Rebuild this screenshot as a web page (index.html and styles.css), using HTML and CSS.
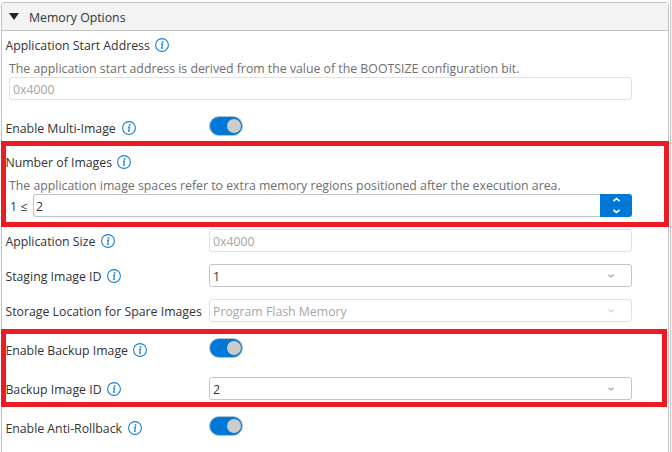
FILE: index.html
```
<!DOCTYPE html>
<html lang="en">
<head>
<meta charset="utf-8">
<title>Memory Options</title>
<link rel="stylesheet" href="styles.css">
</head>
<body>
<svg width="0" height="0" class="defs">
  <symbol id="info" viewBox="0 0 14 14">
    <circle cx="7" cy="7" r="6.4" fill="none" stroke="#1683d8" stroke-width="1.1"/>
    <circle cx="7.6" cy="3.9" r=".9" fill="#1683d8"/>
    <path d="M6 6.1h1.5L6.6 10.2h1.3" fill="none" stroke="#1683d8" stroke-width="1.2"/>
  </symbol>
  <symbol id="chevron" viewBox="0 0 6 4">
    <path d="M.4 .7 3 2.8 5.6 .7" fill="none" stroke="currentColor" stroke-width="1.4"/>
  </symbol>
</svg>
<main class="panel">
  <header class="panel-header">
    <svg class="caret" viewBox="0 0 10 7"><path d="M0 0h10L5 7z" fill="#222"/></svg>
    <h1>Memory Options</h1>
  </header>
  <section class="panel-body">
    <div class="block">
      <div class="label">Application Start Address<svg class="info"><use href="#info"/></svg></div>
      <p class="description">The application start address is derived from the value of the BOOTSIZE configuration bit.</p>
      <div class="field disabled">0x4000</div>
    </div>
    <div class="row row-toggle">
      <div class="label label-wide">Enable Multi-Image<svg class="info"><use href="#info"/></svg></div>
      <div class="toggle"></div>
    </div>
    <div class="block block-number">
      <div class="label">Number of Images<svg class="info"><use href="#info"/></svg></div>
      <p class="description">The application image spaces refer to extra memory regions positioned after the execution area.</p>
      <div class="spinner">
        <span class="bound">1 ≤</span>
        <div class="field">2</div>
        <div class="steps">
          <svg class="chevron up"><use href="#chevron"/></svg>
          <svg class="chevron"><use href="#chevron"/></svg>
        </div>
      </div>
    </div>
    <div class="row">
      <div class="label label-wide">Application Size<svg class="info"><use href="#info"/></svg></div>
      <div class="field disabled">0x4000</div>
    </div>
    <div class="row">
      <div class="label label-wide">Staging Image ID<svg class="info"><use href="#info"/></svg></div>
      <div class="field select">1<svg class="chevron"><use href="#chevron"/></svg></div>
    </div>
    <div class="row">
      <div class="label">Storage Location for Spare Images</div>
      <div class="field select disabled">Program Flash Memory<svg class="chevron"><use href="#chevron"/></svg></div>
    </div>
    <div class="row row-toggle">
      <div class="label">Enable Backup Image<svg class="info"><use href="#info"/></svg></div>
      <div class="toggle"></div>
    </div>
    <div class="row row-backup">
      <div class="label">Backup Image ID<svg class="info"><use href="#info"/></svg></div>
      <div class="field select">2<svg class="chevron"><use href="#chevron"/></svg></div>
    </div>
    <div class="row row-toggle">
      <div class="label label-wide">Enable Anti-Rollback<svg class="info"><use href="#info"/></svg></div>
      <div class="toggle"></div>
    </div>
  </section>
</main>
<div class="highlight highlight-number"></div>
<div class="highlight highlight-backup"></div>
</body>
</html>
```
FILE: styles.css
```
* { box-sizing: border-box; }

body {
  margin: 0;
  width: 672px;
  height: 452px;
  overflow: hidden;
  position: relative;
  display: flex;
  padding: 2px 1px 0;
  background: linear-gradient(to right, #fff 670px, #c8c8c8 670px, #c8c8c8 671px, #f3f3f3 671px);
  font: 12.3px/18px "Open Sans", "Noto Sans", sans-serif;
  color: #333;
}

.defs { position: absolute; }

.panel {
  width: 668px;
  height: 460px;
  border: 1px solid #c4c4c4;
  border-radius: 3px 3px 0 0;
  background: #fff;
}

.panel-header {
  display: flex;
  align-items: center;
  gap: 10px;
  height: 28px;
  padding-left: 7px;
  border-bottom: 1px solid #c4c4c4;
  background: #f3f3f3;
  border-radius: 2px 2px 0 0;
}

.panel-header h1 { margin: 0; padding-top: 2px; font-size: inherit; font-weight: 400; }
.caret { width: 10px; height: 7px; }

.panel-body { padding-left: 4px; }

.label {
  display: flex;
  align-items: center;
  gap: 5px;
  margin-left: -.6px;
  padding-top: 2px;
  white-space: nowrap;
}

.label-wide { gap: 6px; }

.info { width: 14px; height: 14px; flex: none; margin-bottom: 2px; }

.block { width: 626px; }
.block .label { height: 28px; }
.block > .field { margin-left: 3px; }
.block-number { margin-top: 12px; }

.description {
  margin: 0;
  padding: 1px 0 0 3px;
  height: 18px;
  white-space: nowrap;
  color: #6e6e6e;
}

.field {
  display: flex;
  align-items: center;
  justify-content: space-between;
  height: 23px;
  padding: 2px 18px 0 3px;
  border: 1px solid #c4c4c4;
  border-radius: 3px;
}

.disabled { color: #a6a6a6; border-color: #e1e1e1; }

.row {
  display: grid;
  grid-template-columns: 203px 423px;
  height: 23px;
  margin-top: 12px;
}

.row .label { height: 24px; }
.row .info { margin-bottom: 1px; }
.row > .label { padding-top: 1px; }
.row-toggle { height: 20px; margin-top: 16px; }
.row-backup { margin-top: 19px; }

.toggle {
  display: flex;
  align-items: center;
  justify-content: flex-end;
  width: 34px;
  height: 20px;
  padding-right: 1px;
  border: 1px solid #b5c3cf;
  border-radius: 10px;
  background: #0078d7;
}

.toggle::after {
  content: "";
  width: 14px;
  height: 14px;
  border-radius: 50%;
  background: #ccc;
}

.chevron { width: 6px; height: 4px; color: #aaa; margin: 0 -1px 2px 0; }
.disabled .chevron { color: #d4d4d4; }

.spinner { display: flex; height: 23px; padding-left: 4px; }
.bound { width: 23px; line-height: 25px; }
.spinner .field { flex: 1; padding-left: 2px; border-right: 0; border-radius: 3px 0 0 3px; }

.steps {
  display: flex;
  flex-direction: column;
  align-items: center;
  justify-content: space-between;
  width: 32px;
  padding: 3px 0;
  border-radius: 0 3px 3px 0;
  background: #0078d7;
}

.steps .chevron { width: 7px; height: 5px; color: #fff; margin: 0; }
.steps .up { transform: rotate(180deg); }

.highlight {
  position: absolute;
  left: 1px;
  border: 5px solid #ed1c24;
}

.highlight-number { top: 141px; width: 668px; height: 86px; }
.highlight-backup { top: 329px; width: 666px; height: 78px; }
```
